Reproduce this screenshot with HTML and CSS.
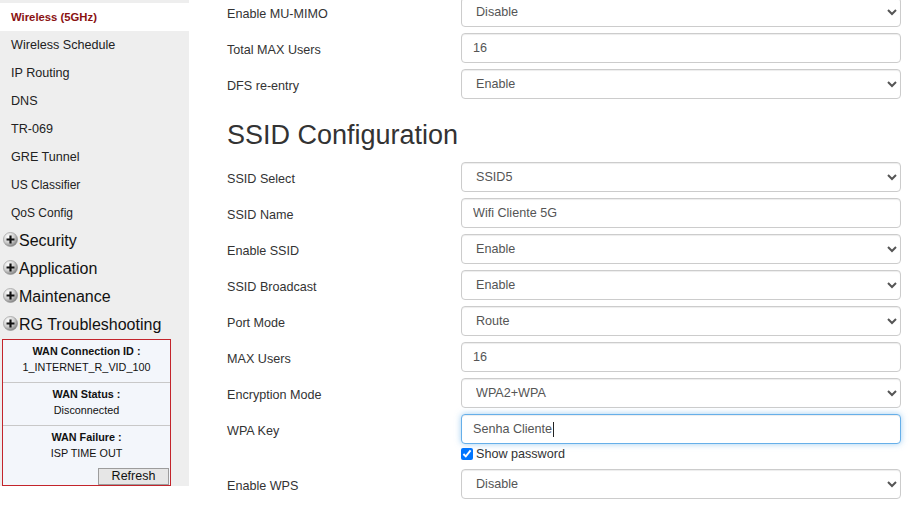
FILE: index.html
```html
<!DOCTYPE html>
<html>
<head>
<meta charset="utf-8">
<link rel="stylesheet" href="styles.css">
</head>
<body>
<div class="page">
  <aside class="sidebar">
    <ul class="menu">
      <li class="item active">Wireless (5GHz)</li>
      <li class="item">Wireless Schedule</li>
      <li class="item">IP Routing</li>
      <li class="item">DNS</li>
      <li class="item">TR-069</li>
      <li class="item">GRE Tunnel</li>
      <li class="item small">US Classifier</li>
      <li class="item small">QoS Config</li>
      <li class="group"><svg class="plus" viewBox="0 0 14 14"><defs><radialGradient id="g" cx="35%" cy="30%" r="75%"><stop offset="0" stop-color="#ffffff"/><stop offset="0.55" stop-color="#cfcfcf"/><stop offset="1" stop-color="#7d7d7d"/></radialGradient></defs><circle cx="7" cy="7" r="6.6" fill="url(#g)" stroke="#8f8f8f" stroke-width="0.5"/><path d="M7 3.3v7.4M3.3 7h7.4" stroke="#111" stroke-width="2"/></svg>Security</li>
      <li class="group"><svg class="plus" viewBox="0 0 14 14"><circle cx="7" cy="7" r="6.6" fill="url(#g)" stroke="#8f8f8f" stroke-width="0.5"/><path d="M7 3.3v7.4M3.3 7h7.4" stroke="#111" stroke-width="2"/></svg>Application</li>
      <li class="group"><svg class="plus" viewBox="0 0 14 14"><circle cx="7" cy="7" r="6.6" fill="url(#g)" stroke="#8f8f8f" stroke-width="0.5"/><path d="M7 3.3v7.4M3.3 7h7.4" stroke="#111" stroke-width="2"/></svg>Maintenance</li>
      <li class="group"><svg class="plus" viewBox="0 0 14 14"><circle cx="7" cy="7" r="6.6" fill="url(#g)" stroke="#8f8f8f" stroke-width="0.5"/><path d="M7 3.3v7.4M3.3 7h7.4" stroke="#111" stroke-width="2"/></svg>RG Troubleshooting</li>
    </ul>
    <div class="wan">
      <div class="wan-sec">
        <div class="wan-title">WAN Connection ID :</div>
        <div class="wan-val">1_INTERNET_R_VID_100</div>
      </div>
      <div class="wan-sec">
        <div class="wan-title">WAN Status :</div>
        <div class="wan-val">Disconnected</div>
      </div>
      <div class="wan-sec last">
        <div class="wan-title">WAN Failure :</div>
        <div class="wan-val">ISP TIME OUT</div>
        <div class="wan-btnrow"><button class="refresh">Refresh</button></div>
      </div>
    </div>
  </aside>
  <main class="main">
    <div class="row first">
      <label class="lbl">Enable MU-MIMO</label>
      <select class="ctl"><option>Disable</option></select>
    </div>
    <div class="row">
      <label class="lbl">Total MAX Users</label>
      <input class="ctl" type="text" value="16">
    </div>
    <div class="row">
      <label class="lbl">DFS re-entry</label>
      <select class="ctl"><option>Enable</option></select>
    </div>
    <h2 class="heading">SSID Configuration</h2>
    <div class="row">
      <label class="lbl">SSID Select</label>
      <select class="ctl"><option>SSID5</option></select>
    </div>
    <div class="row">
      <label class="lbl">SSID Name</label>
      <input class="ctl" type="text" value="Wifi Cliente 5G">
    </div>
    <div class="row">
      <label class="lbl">Enable SSID</label>
      <select class="ctl"><option>Enable</option></select>
    </div>
    <div class="row">
      <label class="lbl">SSID Broadcast</label>
      <select class="ctl"><option>Enable</option></select>
    </div>
    <div class="row">
      <label class="lbl">Port Mode</label>
      <select class="ctl"><option>Route</option></select>
    </div>
    <div class="row">
      <label class="lbl">MAX Users</label>
      <input class="ctl" type="text" value="16">
    </div>
    <div class="row">
      <label class="lbl">Encryption Mode</label>
      <select class="ctl"><option>WPA2+WPA</option></select>
    </div>
    <div class="row">
      <label class="lbl">WPA Key</label>
      <div class="field">
        <div class="ctl fake focused">Senha Cliente<span class="caret"></span></div>
        <label class="show"><input type="checkbox" checked> Show password</label>
      </div>
    </div>
    <div class="row">
      <label class="lbl">Enable WPS</label>
      <select class="ctl"><option>Disable</option></select>
    </div>
  </main>
</div>
</body>
</html>
```

FILE: styles.css
```css
html, body {
  margin: 0;
  padding: 0;
  background: #fff;
  font-family: "Liberation Sans", Arial, sans-serif;
  overflow: hidden;
}

.page {
  display: grid;
  grid-template-columns: 189px 1fr;
  height: 506px;
}

.sidebar {
  background: #eeeeee;
  height: 486px;
  padding-top: 3px;
  box-sizing: border-box;
}

.menu {
  list-style: none;
  margin: 0;
  padding: 0;
}

.item {
  height: 28px;
  line-height: 28px;
  padding-left: 11px;
  font-size: 12.6px;
  color: #222;
}

.item.active {
  background: #fff;
  color: #8a1111;
  font-weight: bold;
  font-size: 11.3px;
}

.item.small {
  font-size: 12px;
}

.group {
  height: 28px;
  line-height: 28px;
  padding-left: 3px;
  font-size: 16px;
  color: #111;
  display: flex;
  align-items: center;
}

.plus {
  width: 15px;
  height: 15px;
  margin-right: 1px;
  margin-top: -4px;
  flex: none;
}

.wan {
  margin-left: 2px;
  width: 169px;
  box-sizing: border-box;
  border: 1px solid #c3242b;
  background: #f3f6fb;
  text-align: center;
  font-size: 10.8px;
  color: #111;
}

.wan-sec {
  padding: 3px 0 7px;
  border-bottom: 1px solid #c8c8c8;
  line-height: 16px;
}

.wan-sec.last {
  border-bottom: none;
  padding-bottom: 0;
}

.wan-title {
  font-weight: bold;
}

.wan-btnrow {
  display: flex;
  justify-content: flex-end;
  padding-right: 1px;
  margin-top: 7px;
}

.refresh {
  width: 71px;
  height: 17px;
  margin: 0;
  padding: 0;
  font-family: "Liberation Sans", Arial, sans-serif;
  font-size: 12.5px;
  line-height: 15px;
  color: #111;
  background: #e6e6e6;
  border: 1px solid #9c9c9c;
  border-radius: 0;
}

.main {
  padding-left: 38px;
  padding-right: 8px;
}

.row {
  display: grid;
  grid-template-columns: 234px 440px;
  margin-bottom: 6px;
}

.row.first {
  margin-top: -3px;
}

.lbl {
  font-size: 12.6px;
  color: #333;
  line-height: 18px;
  padding-top: 8px;
}

.ctl {
  box-sizing: border-box;
  height: 30px;
  width: 440px;
  margin: 0;
  padding: 0 11px;
  font-family: "Liberation Sans", Arial, sans-serif;
  font-size: 12.6px;
  color: #555;
  background: #fff;
  border: 1px solid #ccc;
  border-radius: 4px;
  box-shadow: inset 0 1px 1px rgba(0,0,0,0.075);
  outline: none;
}

select.ctl {
  padding-left: 10px;
}

.fake {
  display: flex;
  align-items: center;
}

.focused {
  border-color: #66afe9;
  box-shadow: inset 0 1px 1px rgba(0,0,0,0.075), 0 0 6px rgba(102,175,233,0.6);
}

.caret {
  display: inline-block;
  width: 1px;
  height: 15px;
  background: #222;
  margin-left: 1px;
}

.show {
  display: flex;
  align-items: center;
  margin-top: 2px;
  height: 16px;
  font-size: 12.6px;
  color: #333;
  margin-bottom: 1px;
}

.show input {
  margin: 0 3px 0 0;
  width: 12px;
  height: 12px;
}

.heading {
  font-size: 27px;
  font-weight: normal;
  line-height: 33px;
  color: #333;
  margin: 20px 0 10px;
}
```
